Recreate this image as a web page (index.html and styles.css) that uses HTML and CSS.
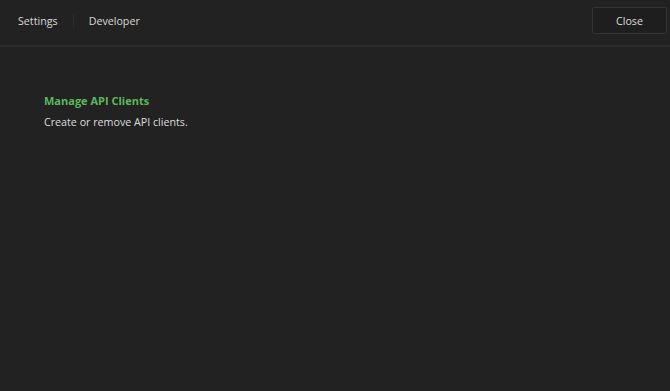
FILE: index.html
```html
<!DOCTYPE html>
<html lang="en">
<head>
    <meta charset="UTF-8">
    <title>Developer Settings</title>
    <link rel="stylesheet" href="styles.css">
</head>
<body>
    <header class="topbar">
        <nav class="crumbs">
            <span class="crumb">Settings</span>
            <span class="crumb-sep"></span>
            <span class="crumb">Developer</span>
        </nav>
        <button class="close-btn">Close</button>
    </header>

    <main class="content">
        <a class="section-link" href="#">Manage API Clients</a>
        <p class="section-desc">Create or remove API clients.</p>
    </main>
</body>
</html>
```

FILE: styles.css
```css
body {
    margin: 0;
    background: #222222;
    color: #dddddd;
    font-family: "Open Sans", "Noto Sans", sans-serif;
    font-size: 10.7px;
    min-height: 100vh;
}
.topbar {
    display: flex;
    align-items: center;
    justify-content: space-between;
    height: 47px;
    padding: 0 3px 0 18px;
    border-bottom: 2px solid #2d2d2d;
    box-sizing: border-box;
}
.crumbs {
    display: flex;
    align-items: center;
    margin-top: -4px;
}
.crumb {
    color: #d8d8d8;
}
.crumb-sep {
    width: 1px;
    height: 14px;
    background: #2c2c2c;
    margin: 0 15px;
}
.close-btn {
    width: 75px;
    height: 27px;
    margin-top: -4px;
    background: #1e1e1e;
    border: 1px solid #343434;
    border-radius: 2px;
    color: #dddddd;
    font-family: inherit;
    font-size: 10.7px;
    cursor: pointer;
}
.content {
    padding: 46px 44px;
}
.section-link {
    display: block;
    color: #5cb85c;
    font-weight: 700;
    font-size: 11px;
    text-decoration: none;
}
.section-desc {
    margin: 7px 0 0;
    color: #dddddd;
}
```
